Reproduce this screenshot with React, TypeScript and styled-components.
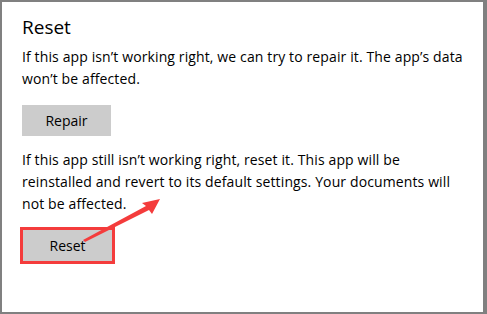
import styled, { createGlobalStyle } from 'styled-components';

const GlobalStyle = createGlobalStyle`
  html, body {
    margin: 0;
    padding: 0;
    background: #ffffff;
  }
`;

const Frame = styled.div`
  position: relative;
  box-sizing: border-box;
  width: 487px;
  height: 314px;
  border-style: solid;
  border-color: #808080;
  border-width: 2px 4px 2px 2px;
  background: #ffffff;
  padding: 12px 0 0 20px;
  font-family: "Open Sans", "Noto Sans", sans-serif;
  color: #000000;
`;

const Title = styled.h2`
  margin: 0 0 6px;
  font-size: 19px;
  font-weight: 400;
  line-height: 26px;
`;

const Text = styled.p`
  margin: 0;
  width: 445px;
  font-size: 14px;
  line-height: 22px;
  letter-spacing: 0.12px;
`;

const Action = styled.div<{ $highlight?: boolean }>`
  display: inline-block;
  margin: ${({ $highlight }) => ($highlight ? '12px 0 0 -2px' : '15px 0 13px')};
  border: ${({ $highlight }) => ($highlight ? '3px solid #f43c3c' : '0')};
`;

const Button = styled.button`
  display: block;
  width: 89px;
  height: 31px;
  border: 0;
  background: #cccccc;
  font-family: inherit;
  font-size: 14px;
  color: #000000;
  padding: 0;
`;

const Arrow = styled.svg`
  position: absolute;
  left: 0;
  top: 0;
  pointer-events: none;
`;

export default function App() {
  return (
    <>
      <GlobalStyle />
      <Frame>
        <Title>Reset</Title>
        <Text>
          If this app isn’t working right, we can try to repair it. The app’s data won’t be affected.
        </Text>
        <Action>
          <Button>Repair</Button>
        </Action>
        <Text>
          If this app still isn’t working right, reset it. This app will be reinstalled and revert
          to its default settings. Your documents will not be affected.
        </Text>
        <Action $highlight>
          <Button>Reset</Button>
        </Action>
        <Arrow width="487" height="314" viewBox="0 0 487 314">
          <path d="M81 238 L144 204 L140 201 L158 197 L150 212 L147 208 L83 240 Z" fill="#f43c3c" />
        </Arrow>
      </Frame>
    </>
  );
}
